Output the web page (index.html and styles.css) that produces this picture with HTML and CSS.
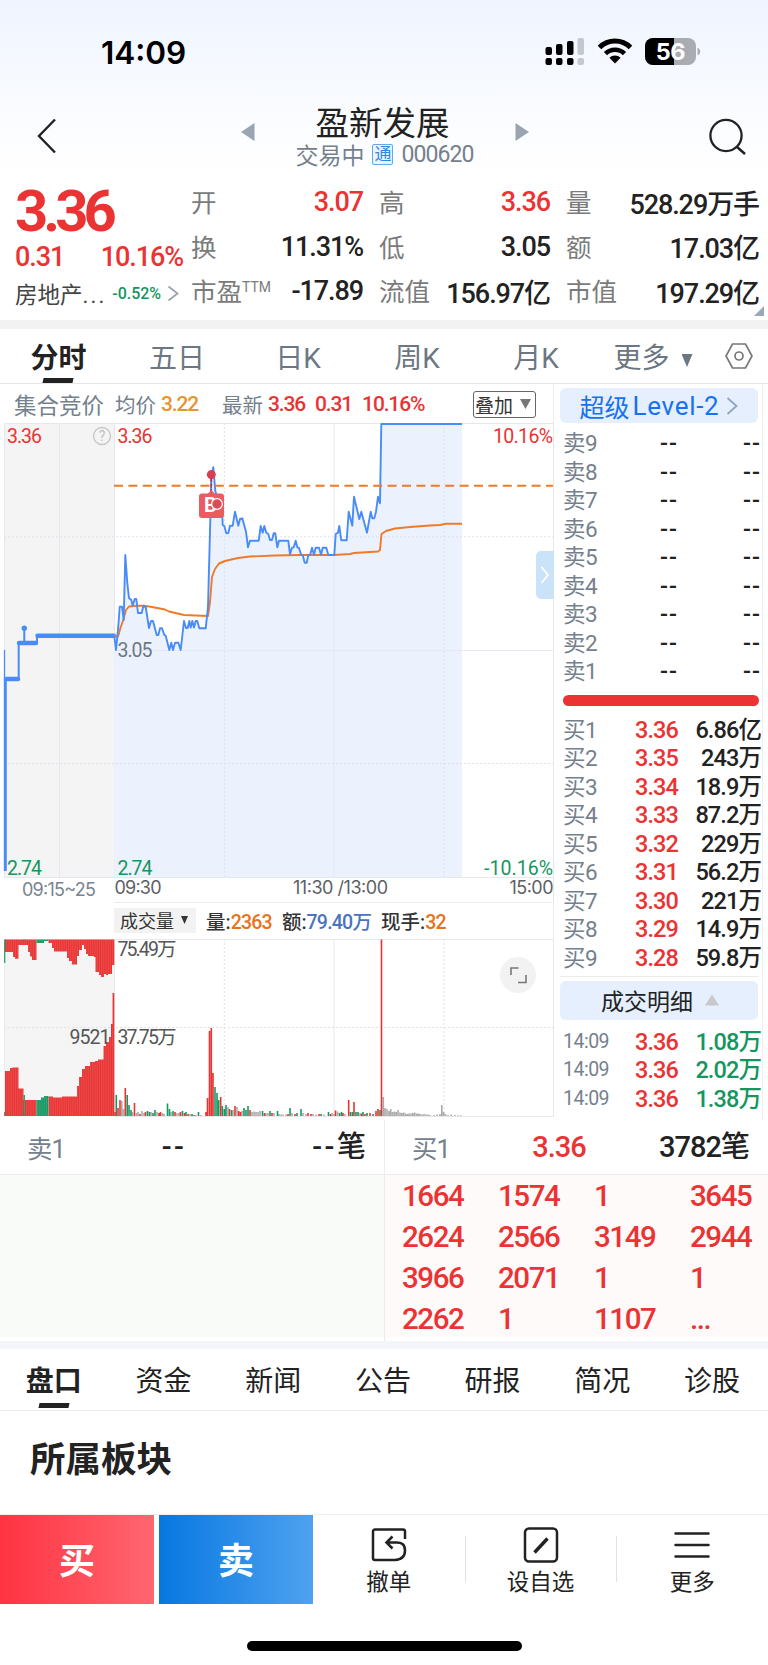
FILE: index.html
```html
<!DOCTYPE html>
<html lang="zh-CN">
<head>
    <meta charset="UTF-8">
    <meta name="viewport" content="width=device-width, initial-scale=1.0">
    <title>盈新发展 000620</title>
    <link rel="stylesheet" href="styles.css">
</head>
<body>
    <header class="top">
        <div class="status-bar">
            <span class="clock">14:09</span>
            <div class="status-icons">
                <svg width="40" height="28" viewBox="0 0 40 28">
                    <g fill="#000">
                        <rect x="0.5" y="9" width="6.5" height="8" rx="2"/>
                        <rect x="11" y="6" width="6.5" height="11" rx="2"/>
                        <rect x="22" y="3" width="6.5" height="14" rx="2"/>
                        <rect x="0.5" y="20" width="6.5" height="7" rx="2"/>
                        <rect x="11" y="20" width="6.5" height="7" rx="2"/>
                        <rect x="22" y="20" width="6.5" height="7" rx="2"/>
                    </g>
                    <g fill="#c3c7cf">
                        <rect x="32.5" y="0" width="6.5" height="17" rx="2"/>
                        <rect x="32.5" y="20" width="6.5" height="7" rx="2"/>
                    </g>
                </svg>
                <svg width="36" height="26" viewBox="0 0 36 26">
                    <path d="M2.5 9.5a22 22 0 0 1 31 0" fill="none" stroke="#000" stroke-width="5"/>
                    <path d="M8.5 15.7a13.5 13.5 0 0 1 19 0" fill="none" stroke="#000" stroke-width="4.6"/>
                    <path d="M18 25.5l-5.6-5.8a8 8 0 0 1 11.2 0z"/>
                </svg>
                <svg width="56" height="28" viewBox="0 0 56 28">
                    <defs><clipPath id="batt"><rect width="51" height="27" rx="8"/></clipPath></defs>
                    <g clip-path="url(#batt)">
                        <rect width="51" height="27" fill="#a9adb3"/>
                        <rect width="29" height="27" fill="#000"/>
                    </g>
                    <path d="M52.5 9.5q2.8 1.4 2.8 4t-2.8 4z" fill="#a9adb3"/>
                    <text class="batt-text" x="25.5" y="21.8" text-anchor="middle">56</text>
                </svg>
            </div>
        </div>
        <div class="nav-bar">
            <svg width="20" height="36" viewBox="0 0 20 36"><path d="M18 1.5L2 18l16 16.5" fill="none" stroke="#222" stroke-width="2.4"/></svg>
            <div class="stock">
                <svg width="14" height="18" viewBox="0 0 14 18"><path d="M13.5 0v18L0 9z" fill="#9aa5b1"/></svg>
                <div class="stock-name">
                    <h1>盈新发展</h1>
                    <p>交易中<i class="tong">通</i><span class="num">000620</span></p>
                </div>
                <svg width="14" height="18" viewBox="0 0 14 18"><path d="M0.5 0v18L14 9z" fill="#9aa5b1"/></svg>
            </div>
            <svg width="38" height="38" viewBox="0 0 38 38"><circle cx="17" cy="17.5" r="15.6" fill="none" stroke="#222" stroke-width="2.3"/><path d="M27.5 28.5l8.5 7.5" stroke="#222" stroke-width="2.5"/></svg>
        </div>
    </header>

    <section class="quote">
        <div class="quote-main">
            <div class="price num">3.36</div>
            <div class="change num"><span>0.31</span><span>10.16%</span></div>
            <div class="sector">
                <span>房地产<i class="dots">...</i></span><b class="num">-0.52%</b>
                <svg width="12" height="17" viewBox="0 0 12 17"><path d="M1.5 1.5l9 7-9 7" fill="none" stroke="#9aa5b1" stroke-width="1.8"/></svg>
            </div>
        </div>
        <div class="stats">
            <div class="stat"><span>开</span><b class="num red">3.07</b></div>
            <div class="stat"><span>高</span><b class="num red">3.36</b></div>
            <div class="stat"><span>量</span><b class="num">528.29万手</b></div>
            <div class="stat"><span>换</span><b class="num">11.31%</b></div>
            <div class="stat"><span>低</span><b class="num">3.05</b></div>
            <div class="stat"><span>额</span><b class="num">17.03亿</b></div>
            <div class="stat"><span>市盈<sup>TTM</sup></span><b class="num">-17.89</b></div>
            <div class="stat"><span>流值</span><b class="num">156.97亿</b></div>
            <div class="stat"><span>市值</span><b class="num">197.29亿</b></div>
        </div>
        <i class="corner"></i>
    </section>

    <nav class="period-tabs">
        <span class="active">分时</span>
        <span>五日</span>
        <span>日K</span>
        <span>周K</span>
        <span>月K</span>
        <span>更多<i class="down"></i></span>
        <svg width="30" height="28" viewBox="0 0 30 28"><path d="M8.5 2h13L28 14l-6.5 12h-13L2 14z" fill="none" stroke="#777" stroke-width="1.7"/><circle cx="15" cy="14" r="4" fill="none" stroke="#777" stroke-width="1.7"/></svg>
    </nav>

    <main class="market">
        <div class="charts">
            <div class="legend">
                <span class="auction">集合竞价</span>
                <span class="avg">均价</span><b class="num orange">3.22</b>
                <span class="last">最新</span><b class="num red">3.36</b><b class="num red">0.31</b><b class="num red">10.16%</b>
                <button class="overlay-btn">叠加<i class="down"></i></button>
            </div>

            <svg class="price-chart" width="554" height="480" viewBox="0 423 554 480">
                <!-- grid -->
                <rect x="4" y="423" width="110.5" height="454" fill="#f4f4f4"/>
                <path d="M4.5 423v454M59.5 423v454M114.5 423v454" stroke="#e6e6f0"/>
                <path class="area" d="M114.3 636L116 650 118.3 626.7 119.7 606.7 122 606.7 123.7 620 125.3 555 127.3 583 129 598 131.3 600 132.7 605.7 134.7 599 136.3 599 138 613 141.7 613 143.3 606 145.7 607 149 628 151 621 153 621 156.7 635 158.3 635 160 628.3 162 628.3 164.3 635 165.7 635.7 169.3 650 171.3 642.7 173 650 175 642.7 178.3 642.7 180.7 650 184 621 186 628 187.7 628 189.3 621 190.7 627.5 192.3 621 194 627.5 195.7 621 197.3 621 199.3 628.3 205.7 628.3 208 606.7 210.3 520 211.3 477 213.3 467.3 215.3 491 222.3 516 222.7 525 224.3 526 226.3 533.3 228.3 533 230 525.7 232.7 525.7 235 511.7 238.3 525.7 240 519 242.3 518.3 246 531.7 248 547.3 250 540.7 258.7 540.7 260.7 526 262.7 532.7 264.3 526 266.3 532.7 268.3 534 270 540 272 540 273.7 533.3 275.3 533.3 277.3 547.3 279 540.7 288.3 540.7 290 554.3 292 547.7 293.7 547.3 295.7 540.7 297.3 547.3 299 548 301 554.3 303 556 304.7 562.7 306.7 562.7 308.3 555.3 310.3 554.3 312 547.7 314 554.7 315.7 547.7 319 547.7 321 554.7 322.7 547.7 326.3 547.7 328.3 555 334.3 555 335.7 534 338 532.7 339.3 526 341.3 540.3 346.7 540.3 348.7 511.7 352.3 525.7 354 496.7 359.3 519 361.3 511.7 367 532.7 370.7 511.7 372.3 518.3 374.3 518.3 376 511.7 378 496.7 380 503.3 381.3 424 462 424V877H114.3z"/>
                <path d="M4 423.5H554M114 650.5H554M4 877.5H554M334 423V877" stroke="#e5e8ef" fill="none"/>
                <path d="M4 536.8H554M4 763.5H554M224.3 423V877M444 423V877" stroke="#dde1e8" stroke-dasharray="2 2" fill="none"/>
                <path d="M553.5 423V903" stroke="#e8e8e8"/>

                <!-- opening auction -->
                <path d="M4.5 650V679" stroke="#4a8cf7" stroke-width="1.3"/>
                <path d="M18.7 679V643H24.3V628.5M24.3 643H37V635.7" fill="none" stroke="#4a8cf7" stroke-width="2"/>
                <path d="M5.3 679V871" stroke="#4a8cf7" stroke-width="3"/>
                <path d="M6 679H18M19 643H36M37.5 635.7H114" fill="none" stroke="#4a8cf7" stroke-width="4.5" stroke-linecap="round"/>
                <circle cx="24.3" cy="628.3" r="2.7" fill="#4a8cf7"/>

                <!-- average, price, limit -->
                <path class="line avg-line" d="M114 636L118 636.5 120.5 628 123.5 619 126 610 129 606.5 137 605.7 144 605.7 152 607 165 609.5 169 611.5 184 615 208 616 210 602 212 577 215 569 219 563.5 225 561 238 558 250 556.5 275 555.5 300 555 334 555 350 554 354 553 378 551.5 380 550 381.5 534 386 531 395 528.5 410 527 430 525.5 440 525 446 523.7 462 523.7"/>
                <path class="line price-line" d="M114.3 636L116 650 118.3 626.7 119.7 606.7 122 606.7 123.7 620 125.3 555 127.3 583 129 598 131.3 600 132.7 605.7 134.7 599 136.3 599 138 613 141.7 613 143.3 606 145.7 607 149 628 151 621 153 621 156.7 635 158.3 635 160 628.3 162 628.3 164.3 635 165.7 635.7 169.3 650 171.3 642.7 173 650 175 642.7 178.3 642.7 180.7 650 184 621 186 628 187.7 628 189.3 621 190.7 627.5 192.3 621 194 627.5 195.7 621 197.3 621 199.3 628.3 205.7 628.3 208 606.7 210.3 520 211.3 477 213.3 467.3 215.3 491 222.3 516 222.7 525 224.3 526 226.3 533.3 228.3 533 230 525.7 232.7 525.7 235 511.7 238.3 525.7 240 519 242.3 518.3 246 531.7 248 547.3 250 540.7 258.7 540.7 260.7 526 262.7 532.7 264.3 526 266.3 532.7 268.3 534 270 540 272 540 273.7 533.3 275.3 533.3 277.3 547.3 279 540.7 288.3 540.7 290 554.3 292 547.7 293.7 547.3 295.7 540.7 297.3 547.3 299 548 301 554.3 303 556 304.7 562.7 306.7 562.7 308.3 555.3 310.3 554.3 312 547.7 314 554.7 315.7 547.7 319 547.7 321 554.7 322.7 547.7 326.3 547.7 328.3 555 334.3 555 335.7 534 338 532.7 339.3 526 341.3 540.3 346.7 540.3 348.7 511.7 352.3 525.7 354 496.7 359.3 519 361.3 511.7 367 532.7 370.7 511.7 372.3 518.3 374.3 518.3 376 511.7 378 496.7 380 503.3 381.3 424 462 424"/>
                <path d="M114 485.7H553" stroke="#f07a26" stroke-width="2" stroke-dasharray="9 5.4"/>

                <!-- trade marker -->
                <circle cx="211.3" cy="474.6" r="4.5" fill="#db3d50"/>
                <path d="M211.3 478V491" stroke="#b52a48" stroke-width="1.5" stroke-dasharray="4 1.5"/>
                <path d="M211.3 489.5l3.5 4.5h-7z" fill="#ea5b62"/>
                <rect x="199" y="493.5" width="25" height="24.5" rx="3" fill="#ea5b62"/>
                <text class="mark" x="204" y="511.5">B</text>
                <circle cx="217" cy="504" r="5.3" fill="#e04a55" stroke="#fff" stroke-width="1.2"/>

                <!-- labels -->
                <g class="lbl">
                    <text class="r" x="7" y="442.5" textLength="35">3.36</text>
                    <text class="r" x="117.5" y="442.5" textLength="35">3.36</text>
                    <text class="r" x="493" y="442.5" textLength="60">10.16%</text>
                    <text x="117.5" y="657" textLength="35">3.05</text>
                    <text class="g" x="7" y="874.5" textLength="35">2.74</text>
                    <text class="g" x="117.5" y="874.5" textLength="35">2.74</text>
                    <text class="g" x="484" y="874.5" textLength="69">-10.16%</text>
                </g>
                <circle cx="102" cy="436" r="8.5" fill="none" stroke="#c6c6c6" stroke-width="1.3"/>
                <text class="help" x="102" y="441" text-anchor="middle">?</text>
                <g class="axis">
                    <text class="a" x="22" y="896" textLength="74">09:15~25</text>
                    <text x="114.5" y="894.3" textLength="47">09:30</text>
                    <text x="293" y="894.3" textLength="95">11:30 /13:00</text>
                    <text x="509.5" y="894.3" textLength="44">15:00</text>
                </g>
                <path d="M114 902.5H554" stroke="#ebebeb"/>

                <!-- side handle -->
                <path d="M554 551h-13a5 5 0 0 0-5 5v38a5 5 0 0 0 5 5h13z" fill="#cbe3f8"/>
                <path d="M541.5 567l6.5 8-6.5 8" fill="none" stroke="#fff" stroke-width="1.7"/>
            </svg>

            <div class="vol-bar">
                <button class="vol-btn">成交量<i class="down"></i></button>
                <span>量:<b class="num orange">2363</b></span>
                <span>额:<b class="num blue">79.40万</b></span>
                <span>现手:<b class="num orange">32</b></span>
            </div>

            <svg class="vol-chart" width="554" height="178" viewBox="0 939 554 178">
                <defs>
                    <pattern id="gap" width="1.83" height="10" x="4" patternUnits="userSpaceOnUse"><rect width="0.35" height="10" fill="#fff" opacity="0.3"/></pattern>
                </defs>
                <rect x="4" y="939" width="110.5" height="177" fill="#f4f4f4"/>
                <path d="M4 939.5H554M4.5 939V1116M114.5 939V1116M334 939V1116M553.5 939V1116M114 1116.5H554" stroke="#e8e8ec" fill="none"/>
                <path d="M4 1027.5H554M224.3 939V1116M444 939V1116" stroke="#dfe1e6" stroke-dasharray="2 2" fill="none"/>

                <path class="up" d="M5 939.5V952H13V957H15V958.7H18.5V945H28V952H30V956.5H32V960H36.5V939.5zM48.5 939.5V943H52V948H54V951.5H67V958H69V961H72V964.5H77V956H79V950H82V945H84V949H86V954H88V956H94V957H95.5V972H99V975H101V977H104V974H106V975H108V974H112V965H114.3V939.5z"/>
                <path class="dn" d="M4 939.5V963H5.3V939.5zM23.5 939.5V941H25V939.5zM36.5 939.5V943H44V941H48.5V939.5z"/>
                <path class="up" d="M5 1116V1071H10V1068H12.5V1067.5H18.5V1088.5H23.5V1100H36.5V1116zM48.5 1116V1096.5H53V1097.5H62V1096.5H77V1086H79V1077H82V1069H85V1066H90V1062H95V1061H98V1059.5H103.5V1046H106V1042H109V1037H111V1024H112.5V993H114.3V1116z"/>
                <path class="dn" d="M4 1116V1112H5V1116zM23.5 1116V1095H25V1116zM36.5 1116V1100H41V1097.5H44V1096H48.5V1116z"/>
                <rect x="4" y="939.5" width="110" height="177" fill="url(#gap)"/>

                <path class="bar gy" d="M121.8 1116V1101M123.5 1116V1109M132.5 1116V1112M136.5 1116V1113M138 1116V1112M142 1116V1111M144 1116V1113M151 1116V1112M157 1116V1112M162.5 1116V1113M164 1116V1114M171 1116V1112M177 1116V1113M179 1116V1113M190 1116V1114M196 1116V1115M201 1116V1115M228 1116V1107M233 1116V1110M237 1116V1107M242 1116V1111M252 1116V1112M254 1116V1111.5M256 1116V1112M258 1116V1112M260 1116V1111M266 1116V1113M268 1116V1113M274 1116V1113M279 1116V1114M281 1116V1114.5M283 1116V1114.5M286 1116V1114.5M292 1116V1113M303 1116V1113M306 1116V1114M313 1116V1114M316 1116V1114.5M324 1116V1114.5M332 1116V1113M334 1116V1114M337.5 1116V1111.5M345 1116V1114M360 1116V1113M383.3 1116V1097M385 1116V1108M387 1116V1109M389 1116V1111M390.7 1116V1109M392.5 1116V1112M394.4 1116V1111.5M396.2 1116V1112M398 1116V1110M400 1116V1112.5M401.8 1116V1113M403.6 1116V1112.5M405.5 1116V1113.5M407.3 1116V1114M409 1116V1113.5M411 1116V1113.5M412.8 1116V1113M414.6 1116V1112.5M416.5 1116V1113.5M418.3 1116V1113.5M420 1116V1114M422 1116V1114.5M424 1116V1114M426 1116V1114.5M428 1116V1114.5M430 1116V1115M434 1116V1115M437 1116V1114.5M440 1116V1114M441.8 1116V1105M443.6 1116V1112M445.5 1116V1114M448 1116V1115M451 1116V1114.5M455 1116V1115M458 1116V1115.2M461 1116V1115.2"/>
                <path class="bar gn" d="M116.3 1116V1095M127.2 1116V1095M129 1116V1105M131 1116V1110M147.5 1116V1111M149.5 1116V1112M153 1116V1113M155 1116V1110M167.5 1116V1103.5M169.5 1116V1109M173 1116V1111M182.5 1116V1111M186 1116V1112M192 1116V1114M198.5 1116V1112M215 1116V1087M217 1116V1093M218.7 1116V1100M222.3 1116V1106M224.3 1116V1109M226 1116V1105M231.5 1116V1110M244 1116V1108M246 1116V1110M248 1116V1106M262.5 1116V1111M270 1116V1111M277.5 1116V1111M290 1116V1108M297 1116V1113M301 1116V1109M321 1116V1114M328.5 1116V1112M339.5 1116V1113M341.5 1116V1112M350.5 1116V1112M352.5 1116V1112M356 1116V1112M358 1116V1112M363 1116V1112M367 1116V1113M373 1116V1114M380 1116V1110"/>
                <path class="bar rd" d="M115 1116V1112M118 1116V1108M120 1116V1100M125.3 1116V1088M134.5 1116V1103M140 1116V1114M145.5 1116V1112M159 1116V1113M160.5 1116V1112M175 1116V1112M180.5 1116V1112M184.5 1116V1113M188 1116V1114M194 1116V1115M206 1116V1112M207.5 1116V1098M209.5 1116V1031M211.3 1116V1028M213 1116V1073M220.7 1116V1097M229.5 1116V1109M235 1116V1106M238.7 1116V1111M240.5 1116V1112M250 1116V1110M264.5 1116V1113M272 1116V1113M288 1116V1114M295 1116V1114M308 1116V1113M311 1116V1114M319 1116V1114M330.5 1116V1114M335.5 1116V1110.5M343 1116V1113M348.7 1116V1100M354 1116V1102M361.5 1116V1113.5M365 1116V1114M370 1116V1113M376 1116V1111M378 1116V1109M381.5 1116V939.5"/>

                <g class="lbl dark">
                    <text x="117.5" y="955.5" textLength="59">75.49万</text>
                    <text x="117.5" y="1043.5" textLength="59">37.75万</text>
                    <text x="69.5" y="1044" textLength="41">9521</text>
                </g>
                <circle cx="518" cy="975" r="18" fill="#f2f2f2"/>
                <path d="M511 975v-7h7.5M526 975v7.5h-8" fill="none" stroke="#777" stroke-width="1.6"/>
            </svg>
        </div>

        <aside class="book">
            <div class="pill level">超级<span>Level-2</span>
                <svg width="12" height="18" viewBox="0 0 12 18"><path d="M1.5 1l9 8-9 8" fill="none" stroke="#8fa6c4" stroke-width="1.8"/></svg>
            </div>
            <div class="rows sells">
                <div class="row"><span>卖9</span><b>--</b><b>--</b></div>
                <div class="row"><span>卖8</span><b>--</b><b>--</b></div>
                <div class="row"><span>卖7</span><b>--</b><b>--</b></div>
                <div class="row"><span>卖6</span><b>--</b><b>--</b></div>
                <div class="row"><span>卖5</span><b>--</b><b>--</b></div>
                <div class="row"><span>卖4</span><b>--</b><b>--</b></div>
                <div class="row"><span>卖3</span><b>--</b><b>--</b></div>
                <div class="row"><span>卖2</span><b>--</b><b>--</b></div>
                <div class="row"><span>卖1</span><b>--</b><b>--</b></div>
            </div>
            <div class="ratio"></div>
            <div class="rows buys">
                <div class="row"><span>买1</span><b class="red">3.36</b><b>6.86亿</b></div>
                <div class="row"><span>买2</span><b class="red">3.35</b><b>243万</b></div>
                <div class="row"><span>买3</span><b class="red">3.34</b><b>18.9万</b></div>
                <div class="row"><span>买4</span><b class="red">3.33</b><b>87.2万</b></div>
                <div class="row"><span>买5</span><b class="red">3.32</b><b>229万</b></div>
                <div class="row"><span>买6</span><b class="red">3.31</b><b>56.2万</b></div>
                <div class="row"><span>买7</span><b class="red">3.30</b><b>221万</b></div>
                <div class="row"><span>买8</span><b class="red">3.29</b><b>14.9万</b></div>
                <div class="row"><span>买9</span><b class="red">3.28</b><b>59.8万</b></div>
            </div>
            <div class="pill detail">成交明细<i class="up-arrow"></i></div>
            <div class="rows ticks">
                <div class="row"><span>14:09</span><b class="red">3.36</b><b class="green">1.08万</b></div>
                <div class="row"><span>14:09</span><b class="red">3.36</b><b class="green">2.02万</b></div>
                <div class="row"><span>14:09</span><b class="red">3.36</b><b class="green">1.38万</b></div>
            </div>
        </aside>
    </main>

    <section class="queue">
        <div class="side sell">
            <div class="queue-head"><span>卖1</span><b class="dash">--</b><b><i class="dash">--</i>笔</b></div>
            <div class="orders"></div>
        </div>
        <div class="side buy">
            <div class="queue-head"><span>买1</span><b class="red">3.36</b><b>3782笔</b></div>
            <div class="orders">
                <b>1664</b><b>1574</b><b>1</b><b>3645</b>
                <b>2624</b><b>2566</b><b>3149</b><b>2944</b>
                <b>3966</b><b>2071</b><b>1</b><b>1</b>
                <b>2262</b><b>1</b><b>1107</b><b>...</b>
            </div>
        </div>
    </section>

    <nav class="info-tabs">
        <span class="active">盘口</span>
        <span>资金</span>
        <span>新闻</span>
        <span>公告</span>
        <span>研报</span>
        <span>简况</span>
        <span>诊股</span>
    </nav>

    <section class="plates"><h2>所属板块</h2></section>

    <footer class="actions">
        <button class="trade buy-btn">买</button>
        <button class="trade sell-btn">卖</button>
        <div class="action">
            <svg width="36" height="36" viewBox="0 0 36 36"><path d="M34 12V4.500a2 2 0 0 0-2-2H4a2 2 0 0 0-2 2V31a2 2 0 0 0 2 2H24q10-.5 10-9.500T24 15.500H16M21.500 9.500L15.500 15.500l6 6" fill="none" stroke="#222" stroke-width="2.5"/></svg>
            <span>撤单</span>
        </div>
        <div class="action">
            <svg width="36" height="36" viewBox="0 0 36 36"><rect x="2" y="1.5" width="32" height="33" rx="4" fill="none" stroke="#222" stroke-width="2.5"/><path d="M11.5 25.500L24.500 11.5" stroke="#222" stroke-width="3.4"/></svg>
            <span>设自选</span>
        </div>
        <div class="action">
            <svg width="36" height="36" viewBox="0 0 36 36"><path d="M1.5 6.500h33M1.5 18h33M1.5 29.500h33" stroke="#222" stroke-width="2.5" stroke-linecap="round"/></svg>
            <span>更多</span>
        </div>
    </footer>
    <div class="home"></div>
</body>
</html>
```
FILE: styles.css
```css
* {
    box-sizing: border-box;
    margin: 0;
    padding: 0;
}
body {
    width: 768px;
    height: 1665px;
    overflow: hidden;
    background: #fff;
    color: #222;
    font-family: Roboto, "Noto Sans CJK SC", sans-serif;
}
svg {
    display: block;
    flex: none;
}
i {
    font-style: normal;
}
b {
    font-weight: 500;
}
button {
    font-family: inherit;
    border: none;
}
.red { color: #eb3333; }
.green { color: #149660; }
.orange { color: #e8731c; }
.blue { color: #4a73c0; }
.num {
    letter-spacing: -0.04em;
}
.down {
    display: inline-block;
    width: 11px;
    height: 12px;
    background: currentColor;
    clip-path: polygon(0 0, 100% 0, 50% 100%);
}

/* header */
.top {
    height: 175px;
    background: linear-gradient(#eff4ff, #f6f9ff 40%, #fff);
}
.status-bar {
    height: 103px;
    padding: 38px 67px 0 101px;
    display: flex;
    justify-content: space-between;
}
.clock {
    font: 600 31.5px/29px Inter, sans-serif;
    color: #000;
}
.status-icons {
    display: flex;
    gap: 12px;
}
.batt-text {
    font: 700 23.5px Inter, sans-serif;
    letter-spacing: -0.5px;
    fill: #fff;
}
.nav-bar {
    display: flex;
    justify-content: space-between;
    align-items: flex-start;
    padding: 0 21px 0 37px;
}
.nav-bar > svg {
    margin-top: 15px;
}
.stock {
    display: flex;
    gap: 41px;
    margin-left: 3px;
}
.stock > svg {
    margin-top: 20px;
}
.stock-name {
    text-align: center;
    width: 178px;
}
.stock-name h1 {
    font-size: 33.5px;
    font-weight: 400;
    line-height: 41px;
    margin: 0 -18px 0 -22px;
}
.stock-name p {
    display: flex;
    align-items: center;
    justify-content: space-between;
    height: 24px;
    margin-top: -2px;
    font-size: 23px;
    color: #74818d;
}
.tong {
    width: 21px;
    height: 21px;
    border: 1px solid #66a8e4;
    border-radius: 2px;
    background: #eaf4fe;
    color: #3187d8;
    font-size: 17px;
    line-height: 18px;
    text-align: center;
}

/* quote */
.quote {
    position: relative;
    display: flex;
    height: 154px;
    border-bottom: 9px solid #f2f2f2;
}
.quote-main {
    width: 191px;
    padding-left: 15px;
}
.price {
    height: 62px;
    padding-top: 7px;
    font-size: 58px;
    font-weight: 700;
    line-height: 58px;
    letter-spacing: -0.085em;
    color: #eb3333;
}
.change {
    display: flex;
    justify-content: space-between;
    width: 168px;
    margin-top: 6px;
    font-size: 27px;
    font-weight: 500;
    line-height: 28px;
    color: #eb3333;
}
.sector {
    display: flex;
    align-items: center;
    justify-content: space-between;
    width: 164px;
    height: 34px;
    margin-top: 5px;
    font-size: 22.5px;
    color: #444;
}
.dots {
    letter-spacing: 2px;
}
.sector b {
    font-size: 16px;
    letter-spacing: 0;
    color: #149660;
}
.stats {
    display: grid;
    grid-template-columns: 172px 171px 193px;
    column-gap: 16px;
    grid-auto-rows: 44.5px;
    padding-top: 5px;
}
.stat {
    display: flex;
    justify-content: space-between;
    align-items: center;
    white-space: nowrap;
}
.stat span {
    margin-top: -3px;
    font-size: 25.5px;
    color: #7b7b7b;
}
.stat b {
    font-size: 27px;
}
.stat sup {
    font-size: 14px;
    line-height: 0;
    vertical-align: 9px;
}
.corner {
    position: absolute;
    right: 4px;
    bottom: 4px;
    width: 10px;
    height: 10px;
    background: #9aa8b5;
    clip-path: polygon(100% 0, 100% 100%, 0 100%);
}

/* period tabs */
.period-tabs {
    display: grid;
    grid-template-columns: 117px 120px 122px 116px 122px 112px 59px;
    align-items: center;
    justify-items: center;
    height: 55px;
    border-bottom: 1px solid #e6e6e6;
    font-size: 28px;
    color: #6b7783;
}
.period-tabs .down {
    margin-left: 12px;
    height: 13px;
    vertical-align: 1px;
}
.active {
    position: relative;
    color: #222;
    font-weight: 700;
}
.active::after {
    content: "";
    position: absolute;
    left: 50%;
    bottom: -7px;
    width: 30px;
    height: 5px;
    margin-left: -15px;
    background: #222;
    transform: skewX(-12deg);
}

/* charts */
.market {
    display: flex;
    height: 736px;
}
.charts {
    width: 554px;
}
.legend {
    display: flex;
    align-items: center;
    height: 39px;
    padding: 1px 17px 0 14px;
    border-right: 1px solid #ececec;
    font-size: 20.5px;
    color: #74818d;
}
.legend b {
    font-size: 21px;
    letter-spacing: -0.055em;
    margin-left: 5px;
}
.legend b + b {
    margin-left: 10px;
}
.auction {
    font-size: 22.5px;
}
.avg {
    margin-left: 11px;
}
.last {
    margin-left: 24px;
}
.legend .orange {
    color: #e89530;
}
.overlay-btn {
    display: flex;
    align-items: center;
    justify-content: space-between;
    width: 63px;
    height: 27px;
    margin-left: auto;
    padding: 0 4px 0 1px;
    border: 1px solid #666;
    border-radius: 3px;
    background: #fff;
    font-size: 19px;
    color: #333;
}
.overlay-btn .down {
    height: 10px;
    color: #777;
}
.area {
    fill: #ebf2fe;
}
.line {
    fill: none;
    stroke-width: 1.9;
    stroke-linejoin: round;
}
.price-line { stroke: #4a8cf7; }
.avg-line { stroke: #f07a26; }
.mark {
    font: 700 20px Roboto, sans-serif;
    fill: #fff;
}
.help {
    font: 14px Roboto, sans-serif;
    fill: #c0c0c0;
}
.lbl {
    font: 19.5px Roboto, "Noto Sans CJK SC", sans-serif;
    fill: #6b7885;
}
.lbl .r { fill: #eb3333; }
.lbl .g { fill: #149660; }
.dark { fill: #555; }
.axis {
    font: 18px Inter, sans-serif;
    fill: #5c6166;
}
.axis .a { fill: #77848f; }
.vol-bar {
    display: flex;
    align-items: center;
    gap: 10px;
    height: 36px;
    padding: 0 0 2px 114px;
    border-right: 1px solid #ececec;
    font-size: 19.5px;
    font-weight: 500;
    color: #333;
}
.vol-btn {
    display: flex;
    align-items: center;
    justify-content: space-between;
    width: 82px;
    height: 25px;
    padding: 0 8px 0 6px;
    background: #f2f2f2;
    font-size: 18px;
    color: #333;
}
.vol-btn .down {
    width: 7px;
    height: 8px;
}
.up { fill: #e93333; }
.dn { fill: #179862; }
.bar { stroke-width: 1.6; }
.gy { stroke: #aaa; }
.gn { stroke: #179862; }
.rd { stroke: #e93333; }

/* order book */
.book {
    width: 209px;
    padding: 4px 3px 0 6px;
    border-right: 1px solid #f0f0f0;
}
.pill {
    display: flex;
    align-items: center;
    justify-content: center;
    width: 198px;
    border-radius: 6px;
    background: #e5effd;
}
.level {
    height: 35px;
    font-size: 25px;
    color: #1672f0;
}
.level span {
    margin-left: 3px;
    font-size: 26px;
    letter-spacing: 0.7px;
}
.level svg {
    margin-left: 7px;
}
.rows {
    padding-left: 3px;
}
.row {
    display: grid;
    grid-template-columns: 55px 60px 83px;
    align-items: center;
    height: 28.5px;
    font-size: 23.5px;
    line-height: 28px;
    letter-spacing: -0.9px;
    text-align: right;
    white-space: nowrap;
}
.row span {
    text-align: left;
    font-size: 22.5px;
    letter-spacing: -0.5px;
    color: #74818d;
}
.sells {
    margin-top: 6px;
}
.sells b {
    letter-spacing: 1px;
}
.ratio {
    width: 196px;
    height: 11px;
    margin: 9px 0 9px 3px;
    border-radius: 6px;
    background: #eb3333;
}
.buys {
    height: 262px;
    padding-top: 1px;
    border-bottom: 1px solid #ececec;
}
.detail {
    height: 39px;
    margin-top: 4px;
    padding-left: 2px;
    font-size: 23px;
}
.up-arrow {
    width: 14px;
    height: 11px;
    margin-left: 12px;
    background: #c8c8c8;
    clip-path: polygon(50% 0, 100% 100%, 0 100%);
}
.ticks {
    margin-top: 8px;
}
.ticks span {
    font-size: 19.5px;
}

/* order queue */
.queue {
    display: flex;
    height: 229px;
    border-bottom: 8px solid #f4f5fa;
}
.side {
    width: 384px;
}
.buy {
    border-left: 1px solid #ececec;
}
.queue-head {
    display: grid;
    grid-template-columns: 86px 122px 1fr;
    align-items: center;
    height: 55px;
    padding: 0 19px 0 27px;
    border-bottom: 1px solid #ececec;
    font-size: 29px;
    letter-spacing: -1px;
    text-align: right;
}
.queue-head span {
    margin-top: -2px;
    font-size: 25.5px;
    color: #74818d;
    text-align: left;
}
.queue-head b {
    line-height: 40px;
}
.queue-head b:nth-child(2) {
    text-align: center;
}
.queue-head .dash {
    letter-spacing: 2.5px;
}
.orders {
    display: grid;
    grid-template-columns: repeat(4, 96px);
    grid-auto-rows: 41px;
    align-items: center;
    height: 162px;
    padding-left: 17px;
    background: #f9fbf9;
    font-size: 29.5px;
    letter-spacing: -1.4px;
    color: #eb3333;
}
.buy .orders {
    background: #fffafa;
}

/* info tabs */
.info-tabs {
    display: grid;
    grid-template-columns: repeat(7, 109.7px);
    align-items: center;
    justify-items: center;
    height: 62px;
    margin-left: -1px;
    padding-bottom: 1px;
    border-bottom: 1px solid #ececec;
    font-size: 28px;
}
.info-tabs .active::after {
    bottom: -9px;
}
.plates {
    height: 104px;
    padding: 24px 30px;
    border-bottom: 1px solid #f0f0f0;
}
.plates h2 {
    font-size: 35.5px;
    line-height: 50px;
}

/* bottom actions */
.actions {
    display: flex;
    height: 89px;
}
.trade {
    width: 154px;
    padding-bottom: 4px;
    color: #fff;
    font-size: 36px;
    font-weight: 700;
}
.buy-btn {
    margin-right: 5px;
    background: linear-gradient(90deg, #ff3342, #ff6670);
}
.sell-btn {
    background: linear-gradient(90deg, #0777e0, #4ea2f0);
}
.action {
    position: relative;
    flex: 1;
    display: flex;
    flex-direction: column;
    align-items: center;
    padding-top: 12px;
    font-size: 22.5px;
    line-height: 28px;
}
.action span {
    margin-top: 5px;
}
.action + .action::before {
    content: "";
    position: absolute;
    left: 0;
    top: 21px;
    width: 1px;
    height: 46px;
    background: #e2e2e2;
}
.home {
    width: 275px;
    height: 10px;
    margin: 37px auto 0;
    border-radius: 5px;
    background: #000;
}
```
